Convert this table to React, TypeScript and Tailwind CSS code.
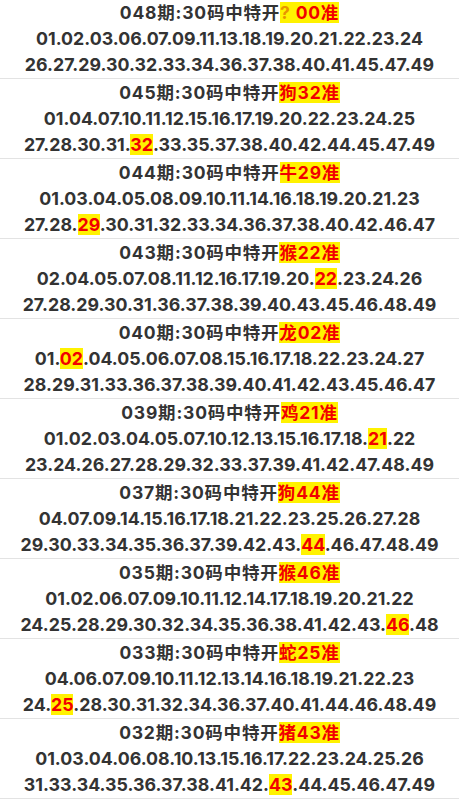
type Issue = {
  no: string;
  zodiac: string;
  hit: string;
  nums: string;
};

const ISSUES: Issue[] = [
  { no: "048", zodiac: "?", hit: "00", nums: "01.02.03.06.07.09.11.13.18.19.20.21.22.23.24.26.27.29.30.32.33.34.36.37.38.40.41.45.47.49" },
  { no: "045", zodiac: "狗", hit: "32", nums: "01.04.07.10.11.12.15.16.17.19.20.22.23.24.25.27.28.30.31.32.33.35.37.38.40.42.44.45.47.49" },
  { no: "044", zodiac: "牛", hit: "29", nums: "01.03.04.05.08.09.10.11.14.16.18.19.20.21.23.27.28.29.30.31.32.33.34.36.37.38.40.42.46.47" },
  { no: "043", zodiac: "猴", hit: "22", nums: "02.04.05.07.08.11.12.16.17.19.20.22.23.24.26.27.28.29.30.31.36.37.38.39.40.43.45.46.48.49" },
  { no: "040", zodiac: "龙", hit: "02", nums: "01.02.04.05.06.07.08.15.16.17.18.22.23.24.27.28.29.31.33.36.37.38.39.40.41.42.43.45.46.47" },
  { no: "039", zodiac: "鸡", hit: "21", nums: "01.02.03.04.05.07.10.12.13.15.16.17.18.21.22.23.24.26.27.28.29.32.33.37.39.41.42.47.48.49" },
  { no: "037", zodiac: "狗", hit: "44", nums: "04.07.09.14.15.16.17.18.21.22.23.25.26.27.28.29.30.33.34.35.36.37.39.42.43.44.46.47.48.49" },
  { no: "035", zodiac: "猴", hit: "46", nums: "01.02.06.07.09.10.11.12.14.17.18.19.20.21.22.24.25.28.29.30.32.34.35.36.38.41.42.43.46.48" },
  { no: "033", zodiac: "蛇", hit: "25", nums: "04.06.07.09.10.11.12.13.14.16.18.19.21.22.23.24.25.28.30.31.32.34.36.37.40.41.44.46.48.49" },
  { no: "032", zodiac: "猪", hit: "43", nums: "01.03.04.06.08.10.13.15.16.17.22.23.24.25.26.31.33.34.35.36.37.38.41.42.43.44.45.46.47.49" },
];

function NumberRow({ nums, hit }: { nums: string[]; hit: string }) {
  return (
    <div className="whitespace-nowrap">
      {nums.map((n, i) => (
        <span key={i}>
          {i > 0 && "."}
          {n === hit ? <span className="bg-[#fff200] text-[#f20000]">{n}</span> : n}
        </span>
      ))}
    </div>
  );
}

function IssueBlock({ issue, first }: { issue: Issue; first: boolean }) {
  const nums = issue.nums.split(".");
  const unknown = issue.zodiac === "?";
  return (
    <div className={`flex flex-col items-center border-b border-[#e3e3e3] ${first ? "h-[79px]" : "h-[80px] pt-[1px]"}`}>
      <div className="whitespace-pre text-[17.5px] tracking-[0.8px]">
        {issue.no}期:30码中特开
        <span className="bg-[#fff200] text-[#f20000]">
          {unknown ? <span className="text-[#e89400]">? </span> : issue.zodiac}
          {issue.hit}准
        </span>
      </div>
      <NumberRow nums={nums.slice(0, 15)} hit={issue.hit} />
      <NumberRow nums={nums.slice(15)} hit={issue.hit} />
    </div>
  );
}

export default function App() {
  return (
    <div
      className="w-[459px] h-[800px] overflow-hidden bg-white text-[#333333] text-[17.8px] leading-[26px] font-bold"
      style={{ fontFamily: 'Inter, "Noto Sans CJK SC", sans-serif' }}
    >
      {ISSUES.map((issue, i) => (
        <IssueBlock key={issue.no} issue={issue} first={i === 0} />
      ))}
    </div>
  );
}
